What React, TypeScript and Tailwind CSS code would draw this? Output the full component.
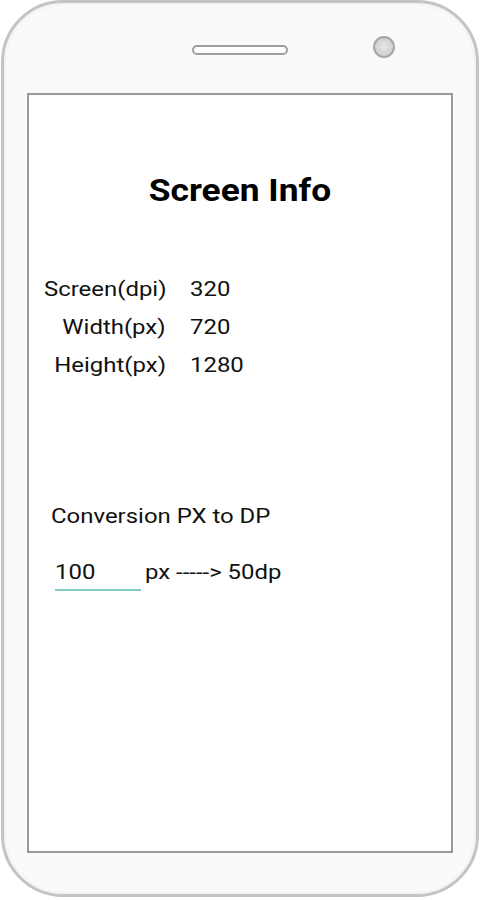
import React from "react";

export default function App() {
  return (
    <div className="w-[480px] h-[900px] bg-white" style={{ fontFamily: "Roboto, 'Noto Sans', sans-serif" }}>
      <div className="relative w-[478px] h-[897px] ml-px rounded-[62px] border-[3px] border-[#c4c4c4] bg-[#fafafa] shadow-[inset_0_0_4px_rgba(0,0,0,0.08)] pt-[90px] px-[23px]">
        <div className="absolute left-[188px] top-[42px] w-[96px] h-[10px] rounded-full border-2 border-[#9e9e9e] bg-white" />
        <div className="absolute left-[369px] top-[33px] w-[22px] h-[22px] rounded-full border-2 border-[#a8a8a8] bg-[radial-gradient(circle_at_50%_50%,#e6e6e6,#c8c8c8)]" />
        <div className="h-[760px] border-2 border-[#9a9a9a] bg-white text-[#111]">
          <div className="pt-[78px] text-center text-[31px] leading-[36px] font-bold text-black">
            <span className="inline-block scale-x-[1.14] origin-center">Screen Info</span>
          </div>
          <div className="mt-[62px] flex flex-col">
            {[
              ["Screen(dpi)", "320"],
              ["Width(px)", "720"],
              ["Height(px)", "1280"],
            ].map(([l, v]) => (
              <div key={l} className="flex h-[38px] items-center text-[21px]">
                <div className="w-[137px] text-right">
                  <span className="inline-block scale-x-[1.14] origin-right">{l}</span>
                </div>
                <div className="ml-[24px]">
                  <span className="inline-block scale-x-[1.14] origin-left">{v}</span>
                </div>
              </div>
            ))}
          </div>
          <div className="mt-[116px] pl-[22px] text-[21px] leading-[30px]">
            <span className="inline-block scale-x-[1.14] origin-left">Conversion PX to DP</span>
          </div>
          <div className="mt-[26px] pl-[26px] flex items-start text-[21px]">
            <div className="w-[86px] h-[34px] border-b-2 border-[#80cbc4] leading-[30px]">
              <span className="inline-block scale-x-[1.14] origin-left">100</span>
            </div>
            <div className="ml-[4px] leading-[30px]">
              <span className="inline-block scale-x-[1.14] origin-left">px -----&gt; 50dp</span>
            </div>
          </div>
        </div>
      </div>
    </div>
  );
}
